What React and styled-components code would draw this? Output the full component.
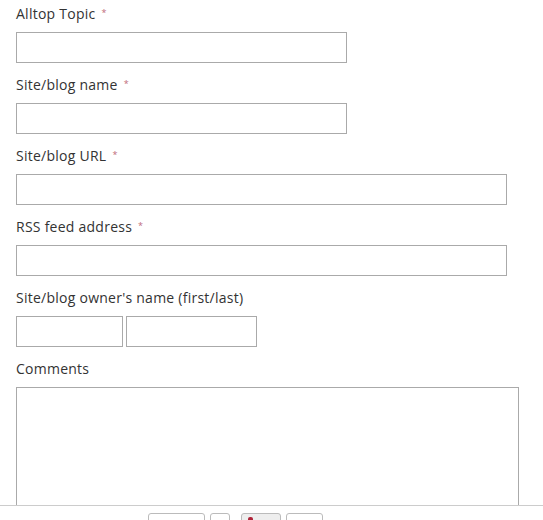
import React from "react";
import styled, { createGlobalStyle } from "styled-components";

const Global = createGlobalStyle`
  html, body { margin: 0; padding: 0; background: #fff; }
  body { font-family: "Open Sans", "Liberation Sans", sans-serif; color: #333; overflow: hidden; }
  * { box-sizing: border-box; }
`;

const Page = styled.div`
  height: 520px;
  overflow: hidden;
  position: relative;
`;

const Form = styled.form`
  display: flex;
  flex-direction: column;
  gap: 12px;
  padding: 4px 16px 0;
`;

const Field = styled.div`
  display: flex;
  flex-direction: column;
  gap: 8px;
`;

const Label = styled.label`
  display: block;
  height: 20px;
  font-size: 14px;
  line-height: 20px;
  letter-spacing: 0.25px;
  color: #333;
`;

const Req = styled.span`
  color: #c06a7a;
  font-size: 9px;
  line-height: 0;
  margin-left: 6px;
  position: relative;
  top: -3px;
`;

const Row = styled.div`
  display: flex;
  gap: 3px;
`;

const Input = styled.input`
  display: block;
  width: ${(p) => p.$w}px;
  height: 31px;
  border: 1px solid #aaa;
  border-radius: 0;
  margin: 0;
  padding: 4px 6px;
  font: inherit;
  background: #fff;
`;

const TextArea = styled.textarea`
  display: block;
  width: 503px;
  height: 160px;
  border: 1px solid #aaa;
  border-radius: 0;
  margin: 0;
  resize: none;
  font: inherit;
`;

const BottomBar = styled.div`
  position: absolute;
  left: 0;
  right: 0;
  bottom: 0;
  height: 15px;
  background: #fff;
  border-top: 1px solid #ccc;
  display: flex;
  align-items: flex-start;
  padding: 7px 0 0 148px;
  gap: 5px;
`;

const Btn = styled.div`
  width: ${(p) => p.$w}px;
  height: 20px;
  border: 1px solid #bbb;
  border-radius: 3px;
  background: ${(p) => (p.$active ? "#eee" : "#fff")};
  margin-left: ${(p) => p.$ml || 0}px;
  position: relative;
  flex: none;
`;

const RedMark = styled.span`
  position: absolute;
  left: 6px;
  top: 3px;
  width: 5px;
  height: 6px;
  background: #b0243a;
  border-radius: 2px 2px 0 0;
`;

export default function App() {
  return (
    <Page>
      <Global />
      <Form>
        <Field>
          <Label>Alltop Topic<Req>*</Req></Label>
          <Input $w={331} />
        </Field>
        <Field>
          <Label>Site/blog name<Req>*</Req></Label>
          <Input $w={331} />
        </Field>
        <Field>
          <Label>Site/blog URL<Req>*</Req></Label>
          <Input $w={491} />
        </Field>
        <Field>
          <Label>RSS feed address<Req>*</Req></Label>
          <Input $w={491} />
        </Field>
        <Field>
          <Label>Site/blog owner's name (first/last)</Label>
          <Row>
            <Input $w={107} />
            <Input $w={131} />
          </Row>
        </Field>
        <Field>
          <Label>Comments</Label>
          <TextArea />
        </Field>
      </Form>
      <BottomBar>
        <Btn $w={57} />
        <Btn $w={20} />
        <Btn $w={40} $active $ml={6}>
          <RedMark />
        </Btn>
        <Btn $w={37} />
      </BottomBar>
    </Page>
  );
}
